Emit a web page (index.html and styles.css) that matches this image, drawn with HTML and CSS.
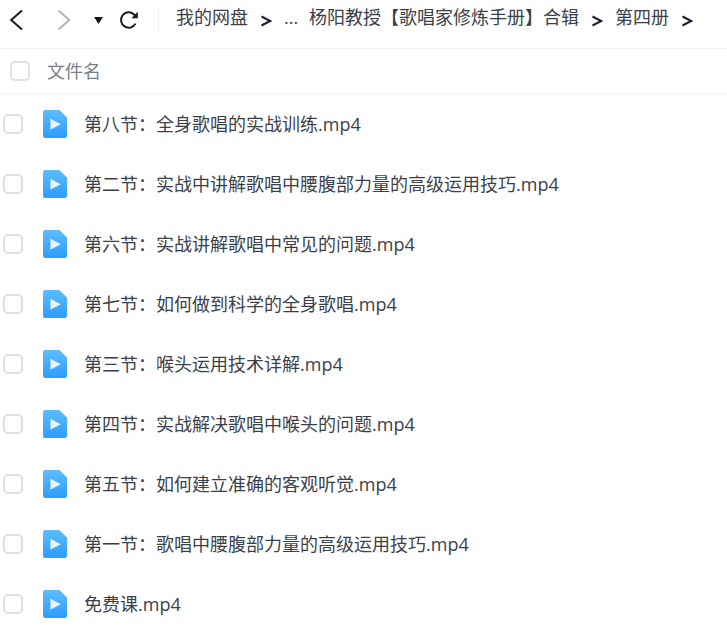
FILE: index.html
```html
<!DOCTYPE html>
<html lang="zh-CN">
<head>
<meta charset="utf-8">
<title>第四册</title>
<link rel="stylesheet" href="styles.css">
</head>
<body>
<svg class="defs" width="0" height="0" aria-hidden="true">
  <defs>
    <linearGradient id="fileGrad" x1="0" y1="0" x2="0" y2="1">
      <stop offset="0" stop-color="#5cbcff"/>
      <stop offset="1" stop-color="#2e9dff"/>
    </linearGradient>
    <symbol id="crumb" viewBox="0 0 12 12"><path d="M1.500 1.500 10.200 6 1.500 10.500" fill="none" stroke="#1c2030" stroke-width="2"/></symbol>
    <symbol id="file" viewBox="0 0 24 28"><path d="M2.500 0H16.500L24 7.500V25.500A2.500 2.500 0 0 1 21.500 28H2.500A2.500 2.500 0 0 1 0 25.500V2.500A2.500 2.500 0 0 1 2.500 0Z" fill="url(#fileGrad)"/><path d="M7.500 8.800 17.800 14.200 7.500 19.600Z" fill="#e8f5ff"/></symbol>
  </defs>
</svg>
<header class="toolbar">
  <svg class="nav nav-back" viewBox="0 0 14 22"><path d="M13 1.500 2.200 11 13 20.500" fill="none" stroke="#1b1d26" stroke-width="2"/></svg>
  <svg class="nav nav-forward" viewBox="0 0 14 22"><path d="M1.500 1.500 12.300 11 1.500 20.500" fill="none" stroke="#b4b4b4" stroke-width="2"/></svg>
  <svg class="caret" viewBox="0 0 10 8"><path d="M0 0H10L5 8Z" fill="#14161f"/></svg>
  <svg class="refresh" viewBox="0 0 20 20"><path d="M16.500 13.600A7.700 7.700 0 1 1 14.800 4.200L17.200 6.600" fill="none" stroke="#1b1d26" stroke-width="2"/><path d="M18.800 1.800V8.200H12.400Z" fill="#1b1d26"/></svg>
  <span class="divider"></span>
  <nav class="crumbs">
    <span class="crumb crumb-root">我的网盘</span>
    <svg class="sep sep-root"><use href="#crumb"/></svg>
    <span class="crumb crumb-more">...</span>
    <span class="crumb">杨阳教授【歌唱家修炼手册】合辑</span>
    <svg class="sep"><use href="#crumb"/></svg>
    <span class="crumb">第四册</span>
    <svg class="sep"><use href="#crumb"/></svg>
  </nav>
</header>
<div class="list-head">
  <span class="check check-head"></span>
  <span class="head-label">文件名</span>
</div>
<ul class="files">
  <li class="file"><span class="check"></span><svg class="file-icon"><use href="#file"/></svg><span class="name">第八节&#xFF1A;全身歌唱的实战训练.mp4</span></li>
  <li class="file"><span class="check"></span><svg class="file-icon"><use href="#file"/></svg><span class="name">第二节&#xFF1A;实战中讲解歌唱中腰腹部力量的高级运用技巧.mp4</span></li>
  <li class="file"><span class="check"></span><svg class="file-icon"><use href="#file"/></svg><span class="name">第六节&#xFF1A;实战讲解歌唱中常见的问题.mp4</span></li>
  <li class="file"><span class="check"></span><svg class="file-icon"><use href="#file"/></svg><span class="name">第七节&#xFF1A;如何做到科学的全身歌唱.mp4</span></li>
  <li class="file"><span class="check"></span><svg class="file-icon"><use href="#file"/></svg><span class="name">第三节&#xFF1A;喉头运用技术详解.mp4</span></li>
  <li class="file"><span class="check"></span><svg class="file-icon"><use href="#file"/></svg><span class="name">第四节&#xFF1A;实战解决歌唱中喉头的问题.mp4</span></li>
  <li class="file"><span class="check"></span><svg class="file-icon"><use href="#file"/></svg><span class="name">第五节&#xFF1A;如何建立准确的客观听觉.mp4</span></li>
  <li class="file"><span class="check"></span><svg class="file-icon"><use href="#file"/></svg><span class="name">第一节&#xFF1A;歌唱中腰腹部力量的高级运用技巧.mp4</span></li>
  <li class="file"><span class="check"></span><svg class="file-icon"><use href="#file"/></svg><span class="name">免费课.mp4</span></li>
</ul>
</body>
</html>
```
FILE: styles.css
```css
* { box-sizing: border-box; }
html, body { margin: 0; height: 100%; overflow: hidden; background: #fff; }
body {
  font-family: "Open Sans", "Noto Sans CJK SC", sans-serif;
  font-size: 18px;
  color: #3b3f4a;
}
.defs { display: block; height: 0; }
.toolbar {
  display: flex;
  align-items: center;
  height: 49px;
  padding: 0 0 8px 9px;
  border-bottom: 1px solid #f1f2f3;
  white-space: nowrap;
}
.nav { width: 14px; height: 22px; flex: none; }
.nav-forward { margin-left: 34px; }
.caret { width: 9px; height: 7px; margin-left: 23px; flex: none; }
.refresh { width: 20px; height: 20px; margin-left: 16px; flex: none; }
.divider { width: 1px; height: 26px; margin-left: 19px; background: #eceded; flex: none; }
.crumbs { display: flex; align-items: center; margin-left: 17px; }
.crumb { line-height: 26px; margin-bottom: 6px; }
.sep { width: 12px; height: 12px; margin: 2px 12px 0; flex: none; }
.crumb-more { width: 25px; }
.list-head {
  display: flex;
  align-items: center;
  height: 45px;
  padding-left: 10px;
  border-bottom: 1px solid #f1f2f3;
}
.head-label { margin-left: 17px; color: #7a7f8c; line-height: 26px; }
.check {
  display: block;
  width: 20px;
  height: 20px;
  flex: none;
  border: 2px solid #dfe0e2;
  border-radius: 5px;
  background: #fff;
}
.files { list-style: none; margin: 0; padding: 0; }
.file {
  display: flex;
  align-items: center;
  height: 60px;
  padding-left: 3px;
}
.file-icon { width: 24px; height: 28px; margin-left: 20px; flex: none; }
.name { margin-left: 17px; line-height: 26px; white-space: nowrap; }
```
